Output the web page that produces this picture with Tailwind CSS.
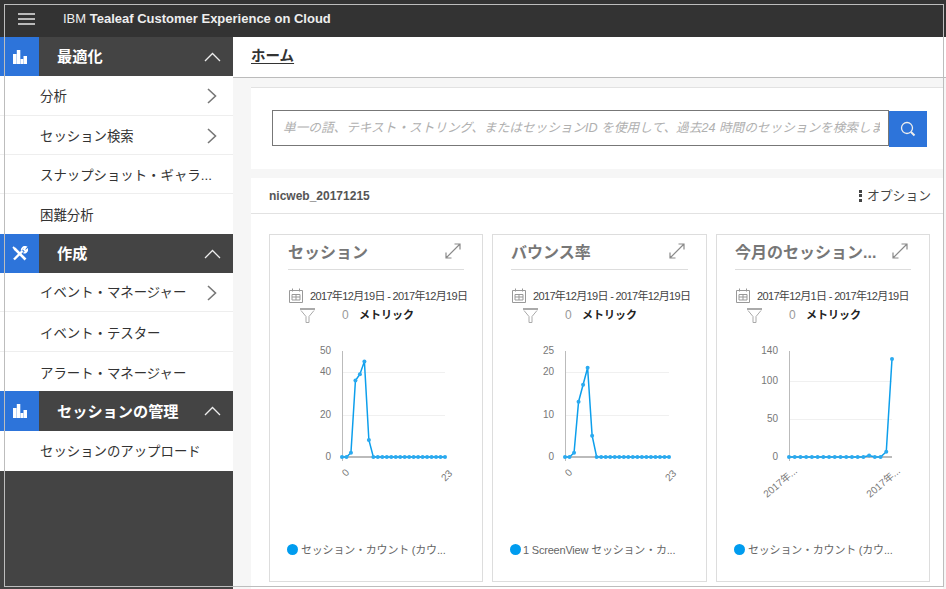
<!DOCTYPE html>
<html lang="ja">
<head>
    <meta charset="UTF-8">
    <title>IBM Tealeaf Customer Experience on Cloud</title>
    <script src="https://cdn.jsdelivr.net/npm/@tailwindcss/browser@4"></script>
</head>
<body class="w-[946px] h-[589px] overflow-hidden relative bg-white font-['Liberation_Sans','Noto_Sans_CJK_JP',sans-serif] text-[#333]">
    <!-- Top bar -->
    <header class="h-[37px] bg-[#333] flex items-center text-white">
        <svg class="ml-[18px] w-[18px] h-[14px]" viewBox="0 0 18 14" fill="none" stroke="#e8e8e8" stroke-width="1.4">
            <path d="M0 2h17M0 7h17M0 12h17"/>
        </svg>
        <div class="ml-[27px] text-[13px] text-[#eee]">IBM <span class="font-bold">Tealeaf Customer Experience on Cloud</span></div>
    </header>

    <div class="flex h-[552px] overflow-hidden">
        <!-- Sidebar -->
        <nav class="w-[233px] bg-[#444] shrink-0">
            <div class="h-[39px] flex items-center bg-[#444] text-white">
                <div class="w-[39px] h-full bg-[#2d74da] flex items-center justify-center">
                    <svg width="14" height="14" viewBox="0 0 14 14" fill="#fff"><path d="M0 4h3.500v10H0zM3.800 0h3.500v14H3.800zM7.600 9h2.600v5H7.600zM10.500 6H14v8h-3.500z"/></svg>
                </div>
                <span class="ml-[18px] pt-[2px] text-[15.2px] font-bold flex-1">最適化</span>
                <svg class="mr-[12px]" width="17" height="10" viewBox="0 0 17 10" fill="none" stroke="#eee" stroke-width="1.3"><path d="M1 9l7.500-7.500L16 9"/></svg>
            </div>
            <a class="h-[40px] bg-white border-b border-[#eee] flex items-center pl-[40px] pt-[4px] text-[13.4px]"><span class="flex-1">分析</span><svg class="mr-[16px] mb-[3px]" width="10" height="16" viewBox="0 0 10 16" fill="none" stroke="#777" stroke-width="1.6"><path d="M1 1l7.500 7L1 15"/></svg></a>
            <a class="h-[39px] bg-white border-b border-[#eee] flex items-center pl-[40px] pt-[4px] text-[13.4px]"><span class="flex-1">セッション検索</span><svg class="mr-[16px] mb-[3px]" width="10" height="16" viewBox="0 0 10 16" fill="none" stroke="#777" stroke-width="1.6"><path d="M1 1l7.500 7L1 15"/></svg></a>
            <a class="h-[39px] bg-white border-b border-[#eee] flex items-center pl-[40px] pt-[4px] text-[13.4px]">スナップショット・ギャラ...</a>
            <a class="h-[40px] bg-white flex items-center pl-[40px] pt-[4px] text-[13.4px]">困難分析</a>

            <div class="h-[39px] flex items-center bg-[#444] text-white">
                <div class="w-[39px] h-full bg-[#2d74da] flex items-center justify-center">
                    <svg class="mb-[1px]" width="16" height="15" viewBox="0 0 16 15" fill="none" stroke="#fff"><path stroke-width="2.400" d="M2 13.500L10.500 5"/><path stroke-width="2.600" d="M2.500 2.500L13.500 13.500"/><path stroke-width="1.800" d="M1 1l3 3M9.700 4.500a3.300 3.300 0 0 1 4.300-3.500L12 3.500l1.500 1.500 2-1.500a3.300 3.300 0 0 1-4 3"/></svg>
                </div>
                <span class="ml-[18px] pt-[2px] text-[15.2px] font-bold flex-1">作成</span>
                <svg class="mr-[12px]" width="17" height="10" viewBox="0 0 17 10" fill="none" stroke="#eee" stroke-width="1.3"><path d="M1 9l7.500-7.500L16 9"/></svg>
            </div>
            <a class="h-[39px] bg-white border-b border-[#eee] flex items-center pl-[40px] pt-[2px] text-[13.4px]"><span class="flex-1">イベント・マネージャー</span><svg class="mr-[16px]" width="10" height="16" viewBox="0 0 10 16" fill="none" stroke="#777" stroke-width="1.6"><path d="M1 1l7.500 7L1 15"/></svg></a>
            <a class="h-[40px] bg-white border-b border-[#eee] flex items-center pl-[40px] pt-[5px] text-[13.4px]">イベント・テスター</a>
            <a class="h-[39px] bg-white flex items-center pl-[40px] pt-[5px] text-[13.4px]">アラート・マネージャー</a>

            <div class="h-[40px] flex items-center bg-[#444] text-white">
                <div class="w-[39px] h-full bg-[#2d74da] flex items-center justify-center">
                    <svg width="14" height="14" viewBox="0 0 14 14" fill="#fff"><path d="M0 4h3.500v10H0zM3.800 0h3.500v14H3.800zM7.600 9h2.600v5H7.600zM10.500 6H14v8h-3.500z"/></svg>
                </div>
                <span class="ml-[18px] pt-[3px] text-[15.2px] font-bold flex-1">セッションの管理</span>
                <svg class="mr-[12px]" width="17" height="10" viewBox="0 0 17 10" fill="none" stroke="#eee" stroke-width="1.3"><path d="M1 9l7.500-7.500L16 9"/></svg>
            </div>
            <a class="h-[40px] bg-white flex items-center pl-[40px] pt-[3px] text-[13.4px]">セッションのアップロード</a>
        </nav>

        <!-- Main -->
        <main class="flex-1 min-w-0 flex flex-col">
            <div class="h-[41px] bg-white border-b border-[#bbb] pl-[18px] shrink-0 flex items-center">
                <span class="text-[14.5px] font-bold underline underline-offset-2">ホーム</span>
            </div>
            <div class="flex-1 bg-[#f6f6f6] pl-[18px] pt-[9px] pr-[3px]">
                <!-- Search -->
                <div class="h-[82px] bg-white border-t border-[#e2e2e2] pl-[21px] pt-[22px] flex items-start">
                    <input class="w-[617px] h-[36px] border border-[#777] pl-[10px] pr-[8px] text-[12.65px] placeholder:italic placeholder:text-[#b0b0b0]" placeholder="単一の語、テキスト・ストリング、またはセッションID を使用して、過去24 時間のセッションを検索します">
                    <div class="w-[38px] h-[36px] mt-px bg-[#2d74da] flex items-center justify-center">
                        <svg width="16" height="16" viewBox="0 0 16 16" fill="none" stroke="#eee"><circle cx="7" cy="7" r="5.500" stroke-width="1.300"/><path d="M11 11l3.500 3.500" stroke-width="2"/></svg>
                    </div>
                </div>

                <!-- Dashboard -->
                <div class="mt-[9px] h-[500px] bg-white">
                    <div class="h-[36px] border-b border-[#e2e2e2] pl-[18px] pr-[12px] flex items-center justify-between">
                        <span class="pt-px text-[12px] font-bold text-[#555]">nicweb_20171215</span>
                        <span class="flex items-center text-[12.8px] text-[#444]">
                            <span class="w-[3px] flex flex-col gap-[1.500px] mr-[5px]"><i class="block h-[3px] bg-[#444]"></i><i class="block h-[3px] bg-[#444]"></i><i class="block h-[3px] bg-[#444]"></i></span>オプション
                        </span>
                    </div>
                    <div class="flex gap-[9px] pl-[18px] pt-[20px]">

                        <section class="w-[214px] h-[348px] border border-[#ddd] shrink-0 px-[18px]">
                            <div class="h-[35px] border-b border-[#ddd] flex items-center justify-between pr-[3px]">
                                <h3 class="pt-[2px] text-[16px] font-bold text-[#777]">セッション</h3>
                                <svg class="mb-[3px] shrink-0" width="16" height="16" viewBox="0 0 16 16" fill="none" stroke="#8a8a8a" stroke-width="1.200"><path d="M1 15L15 1M9.500 1H15v5.500M1 9.500V15h5.500"/></svg>
                            </div>
                            <div class="flex items-center mt-[18px] h-[16px]">
                                <svg class="shrink-0 ml-px -mt-px" width="14" height="15" viewBox="0 0 14 15" fill="none" stroke="#999"><path d="M0.500 2.500h13v12h-13zM3.500 0.500v3M10.500 0.500v3M3 6.500h8v5.500H3zM7 6.500v5.500M3 9h8"/></svg>
                                <span class="ml-[7px] text-[11px] text-[#444] whitespace-nowrap tracking-[-0.65px]">2017年12月19日 - 2017年12月19日</span>
                            </div>
                            <div class="flex items-center h-[20px] mt-px ml-[12px]">
                                <svg class="shrink-0" width="15" height="15" viewBox="0 0 15 15" fill="none" stroke="#aaa"><path stroke-width="2" d="M0 1h15"/><path d="M1 2.500L6 8.500v6h3v-6l5-6"/></svg>
                                <span class="ml-[27px] w-[17px] text-[12px] text-[#999]">0</span>
                                <span class="text-[11px] font-bold text-[#222]">メトリック</span>
                            </div>
                            <svg class="chart block -ml-[18px] mt-[13px]" width="212" height="200"></svg>
                            <div class="flex items-center -ml-px mt-[4px]">
                                <i class="block shrink-0 w-[11px] h-[11px] rounded-full bg-[#009cef] -mt-[2px]"></i>
                                <span class="ml-[3px] text-[11px] tracking-[-0.2px] text-[#666] whitespace-nowrap">セッション・カウント (カウ...</span>
                            </div>
                        </section>

                        <section class="w-[215px] h-[348px] border border-[#ddd] shrink-0 px-[18px]">
                            <div class="h-[35px] border-b border-[#ddd] flex items-center justify-between pr-[3px]">
                                <h3 class="pt-[2px] text-[16px] font-bold text-[#777]">バウンス率</h3>
                                <svg class="mb-[3px] shrink-0" width="16" height="16" viewBox="0 0 16 16" fill="none" stroke="#8a8a8a" stroke-width="1.200"><path d="M1 15L15 1M9.500 1H15v5.500M1 9.500V15h5.500"/></svg>
                            </div>
                            <div class="flex items-center mt-[18px] h-[16px]">
                                <svg class="shrink-0 ml-px -mt-px" width="14" height="15" viewBox="0 0 14 15" fill="none" stroke="#999"><path d="M0.500 2.500h13v12h-13zM3.500 0.500v3M10.500 0.500v3M3 6.500h8v5.500H3zM7 6.500v5.500M3 9h8"/></svg>
                                <span class="ml-[7px] text-[11px] text-[#444] whitespace-nowrap tracking-[-0.65px]">2017年12月19日 - 2017年12月19日</span>
                            </div>
                            <div class="flex items-center h-[20px] mt-px ml-[12px]">
                                <svg class="shrink-0" width="15" height="15" viewBox="0 0 15 15" fill="none" stroke="#aaa"><path stroke-width="2" d="M0 1h15"/><path d="M1 2.500L6 8.500v6h3v-6l5-6"/></svg>
                                <span class="ml-[27px] w-[17px] text-[12px] text-[#999]">0</span>
                                <span class="text-[11px] font-bold text-[#222]">メトリック</span>
                            </div>
                            <svg class="chart block -ml-[18px] mt-[13px]" width="213" height="200"></svg>
                            <div class="flex items-center -ml-px mt-[4px]">
                                <i class="block shrink-0 w-[11px] h-[11px] rounded-full bg-[#009cef] -mt-[2px]"></i>
                                <span class="ml-[2px] text-[11px] tracking-[-0.2px] text-[#666] whitespace-nowrap">1 ScreenView セッション・カ...</span>
                            </div>
                        </section>

                        <section class="w-[214px] h-[348px] border border-[#ddd] shrink-0 px-[18px]">
                            <div class="h-[35px] border-b border-[#ddd] flex items-center justify-between pr-[3px]">
                                <h3 class="pt-[2px] text-[16px] font-bold text-[#777] whitespace-nowrap">今月のセッション...</h3>
                                <svg class="mb-[3px] shrink-0" width="16" height="16" viewBox="0 0 16 16" fill="none" stroke="#8a8a8a" stroke-width="1.200"><path d="M1 15L15 1M9.500 1H15v5.500M1 9.500V15h5.500"/></svg>
                            </div>
                            <div class="flex items-center mt-[18px] h-[16px]">
                                <svg class="shrink-0 ml-px -mt-px" width="14" height="15" viewBox="0 0 14 15" fill="none" stroke="#999"><path d="M0.500 2.500h13v12h-13zM3.500 0.500v3M10.500 0.500v3M3 6.500h8v5.500H3zM7 6.500v5.500M3 9h8"/></svg>
                                <span class="ml-[7px] text-[11px] text-[#444] whitespace-nowrap tracking-[-0.65px]">2017年12月1日 - 2017年12月19日</span>
                            </div>
                            <div class="flex items-center h-[20px] mt-px ml-[12px]">
                                <svg class="shrink-0" width="15" height="15" viewBox="0 0 15 15" fill="none" stroke="#aaa"><path stroke-width="2" d="M0 1h15"/><path d="M1 2.500L6 8.500v6h3v-6l5-6"/></svg>
                                <span class="ml-[27px] w-[17px] text-[12px] text-[#999]">0</span>
                                <span class="text-[11px] font-bold text-[#222]">メトリック</span>
                            </div>
                            <svg class="chart block -ml-[18px] mt-[13px]" width="212" height="200"></svg>
                            <div class="flex items-center -ml-px mt-[4px]">
                                <i class="block shrink-0 w-[11px] h-[11px] rounded-full bg-[#009cef] -mt-[2px]"></i>
                                <span class="ml-[3px] text-[11px] tracking-[-0.2px] text-[#666] whitespace-nowrap">セッション・カウント (カウ...</span>
                            </div>
                        </section>

                    </div>
                </div>
            </div>
        </main>
    </div>

    <!-- Window frame drawn over everything -->
    <div class="absolute left-[4px] top-[4px] w-[940px] h-[583px] border border-[#bdbdbd] pointer-events-none"></div>

    <script>
        // Coordinates are relative to each chart svg
        const zeros = n => new Array(n).fill(0);
        const charts = [
            { axis: 72, right: 175, grid: [40, 20], max: 50, perUnit: 2.125,
              values: [0, 0, 2, 36, 39, 45, 8, ...zeros(17)], labels: ['0', '23'], short: true },
            { axis: 72, right: 176, grid: [20, 10], max: 25, perUnit: 4.25,
              values: [0, 0, 1, 13, 17, 21, 5, ...zeros(17)], labels: ['0', '23'], short: true },
            { axis: 72, right: 175, grid: [100, 50], max: 140, perUnit: 0.76,
              values: [...zeros(14), 2, 0, 0, 7, 129], labels: ['2017年...', '2017年...'], short: false }
        ];
        const baseY = 119;
        const topY = 13;

        function svgEl(parent, name, attrs, text) {
            const el = document.createElementNS('http://www.w3.org/2000/svg', name);
            for (const key in attrs) el.setAttribute(key, attrs[key]);
            if (text) el.textContent = text;
            parent.appendChild(el);
            return el;
        }

        document.querySelectorAll('.chart').forEach((svg, i) => {
            const c = charts[i];
            const font = { 'font-size': 10, fill: '#777', 'font-family': "'Liberation Sans','Noto Sans CJK JP',sans-serif" };

            c.grid.forEach(value => {
                const y = Math.round(baseY - value * c.perUnit) + 0.5;
                svgEl(svg, 'line', { x1: c.axis, x2: c.right, y1: y, y2: y, stroke: '#f0f0f0' });
            });
            svgEl(svg, 'line', { x1: c.axis + 0.5, x2: c.axis + 0.5, y1: topY, y2: baseY + 4, stroke: '#bbb' });
            svgEl(svg, 'line', { x1: c.axis, x2: c.right, y1: baseY, y2: baseY, stroke: '#bbb', 'stroke-width': 2 });

            // y axis labels
            [c.max, ...c.grid, 0].forEach(value => {
                const y = value === c.max ? topY + 3 : baseY - value * c.perUnit + 3;
                svgEl(svg, 'text', { x: c.axis - 11, y: y, 'text-anchor': 'end', ...font }, String(value));
            });

            const step = (c.right - c.axis) / (c.values.length - 1);
            const points = c.values.map((v, n) => [c.axis + n * step, baseY - v * c.perUnit]);
            svgEl(svg, 'polyline', { points: points.map(p => p.join(',')).join(' '), fill: 'none', stroke: '#0d9fec', 'stroke-width': 1.5 });
            points.forEach(p => svgEl(svg, 'circle', { cx: p[0], cy: p[1], r: 2, fill: '#2aaaf0' }));

            // x axis labels
            c.labels.forEach((label, n) => {
                const x = n === 0 ? c.axis : c.right;
                if (c.short) {
                    svgEl(svg, 'text', { 'text-anchor': 'end', transform: `translate(${x + 8},${baseY + (n ? 17 : 16)}) rotate(-45)`, ...font }, label);
                } else {
                    svgEl(svg, 'text', { 'text-anchor': 'end', transform: `translate(${x + 9},${baseY + 15}) rotate(-40)`, ...font }, label);
                }
            });
        });
    </script>
</body>
</html>
